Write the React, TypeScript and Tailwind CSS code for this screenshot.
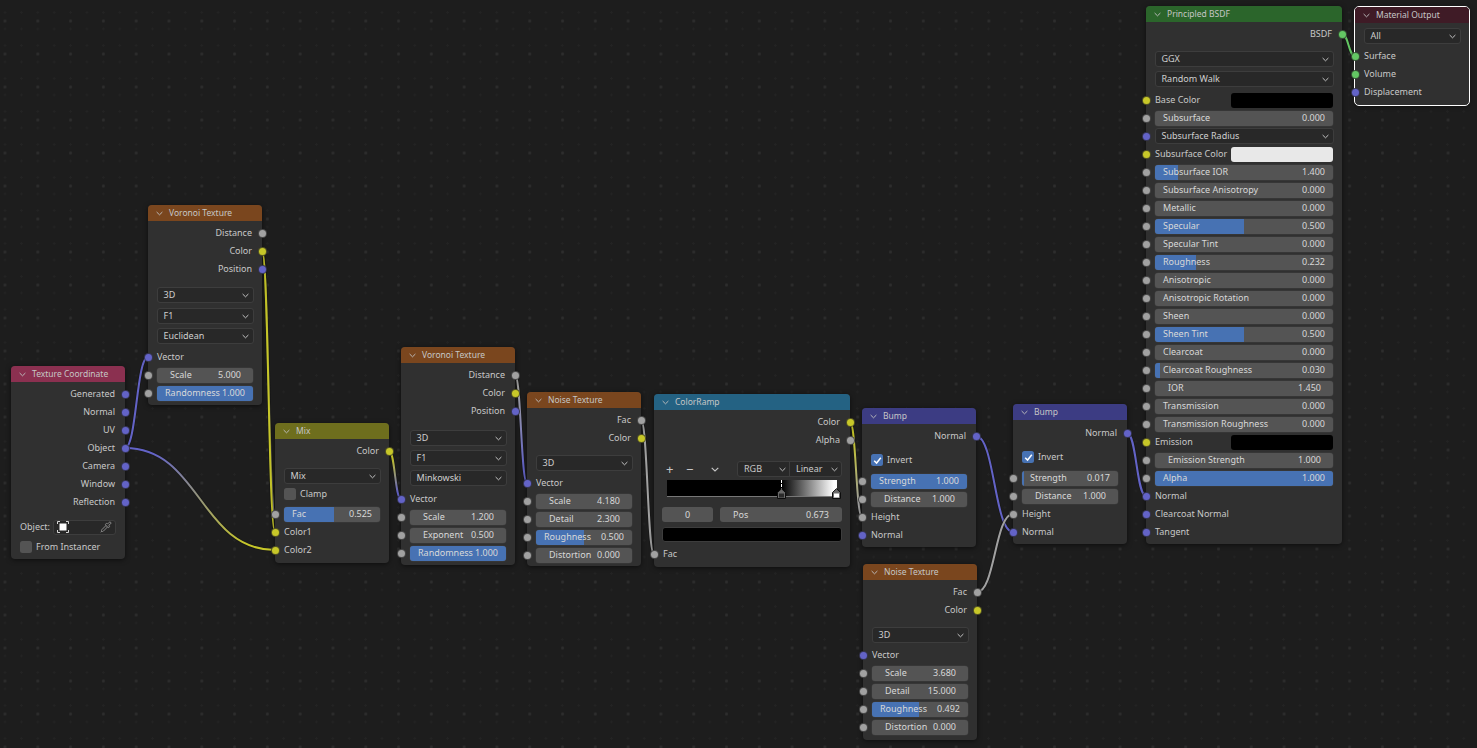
import React from "react";
import { Pipette } from "lucide-react";

const grey = "bg-[#a1a1a1]";
const yellow = "bg-[#c7c729]";
const blue = "bg-[#6363c7]";
const green = "bg-[#63c763]";

const wireColors = { g: "#a1a1a1", y: "#c7c729", b: "#6363c7", n: "#63c763" };

type WireColor = keyof typeof wireColors;

const wires: [number, number, WireColor, number, number, WireColor][] = [
  [125, 448, "b", 148, 357, "b"],
  [125, 448, "b", 275, 550, "y"],
  [262, 251, "y", 275, 514, "g"],
  [262, 251, "y", 275, 532, "y"],
  [389, 451, "y", 401, 499, "b"],
  [515, 375, "g", 527, 483, "b"],
  [641, 420, "g", 654, 554, "g"],
  [850, 422, "y", 862, 517, "g"],
  [976, 436, "b", 1013, 532, "b"],
  [977, 592, "g", 1013, 514, "g"],
  [1127, 433, "b", 1146, 496, "b"],
  [1342, 34, "n", 1355, 56, "n"],
];

function Wires() {
  return (
    <svg className="absolute inset-0" width={1477} height={748}>
      <defs>
        {wires.map(([x1, y1, c1, x2, y2, c2], i) => (
          <linearGradient key={i} id={`w${i}`} gradientUnits="userSpaceOnUse" x1={x1} y1={y1} x2={x2} y2={y2 + 0.01}>
            <stop offset="0.15" stopColor={wireColors[c1]} />
            <stop offset="0.85" stopColor={wireColors[c2]} />
          </linearGradient>
        ))}
      </defs>
      {wires.map(([x1, y1, , x2, y2], i) => {
        const h = (x2 - x1) / 2;
        const d = `M${x1} ${y1}C${x1 + h} ${y1} ${x2 - h} ${y2} ${x2} ${y2}`;
        return (
          <g key={i} fill="none">
            <path d={d} stroke="#151515" strokeOpacity="0.6" strokeWidth="3.6" />
            <path d={d} stroke={`url(#w${i})`} strokeWidth="2" />
          </g>
        );
      })}
    </svg>
  );
}

function Chevron({ className = "" }: { className?: string }) {
  return (
    <svg viewBox="0 0 8 5" className={`w-[7px] h-[5px] shrink-0 ${className}`} fill="none" stroke="currentColor" strokeWidth="1.1">
      <path d="M0.7 0.8 4 4 7.3 0.8" />
    </svg>
  );
}

function Socket({ color, side }: { color: string; side: "in" | "out" }) {
  return (
    <span
      className={`absolute top-[4.5px] w-[9px] h-[9px] rounded-full border border-[#222222]/70 ${color} ${
        side === "in" ? "left-[-4.5px]" : "right-[-4.5px]"
      }`}
    />
  );
}

function Node({
  pos,
  head,
  title,
  selected,
  children,
}: {
  pos: string;
  head: string;
  title: string;
  selected?: boolean;
  children: React.ReactNode;
}) {
  return (
    <div
      className={`absolute ${pos} rounded-[4px] bg-[#303030] shadow-[0_1px_5px_rgba(0,0,0,0.55)] ${
        selected ? "outline outline-[1.5px] outline-white" : ""
      }`}
    >
      <div className={`relative h-4 rounded-t-[4px] ${head} pl-[21px] text-[#c6c6c6] text-[8.5px] leading-4`}>
        <Chevron className="absolute left-[8px] top-[6px] text-[#bdbdbd]" />
        {title}
      </div>
      {children}
    </div>
  );
}

function Out({ label, color, cls = "" }: { label: string; color: string; cls?: string }) {
  return (
    <div className={`relative h-[18px] leading-[18px] text-right pr-[10px] ${cls}`}>
      {label}
      <Socket color={color} side="out" />
    </div>
  );
}

function In({ label, color, cls = "" }: { label: string; color: string; cls?: string }) {
  return (
    <div className={`relative h-[18px] leading-[18px] pl-[9px] ${cls}`}>
      {label}
      <Socket color={color} side="in" />
    </div>
  );
}

function Field({
  label,
  value,
  fill,
  cls = "",
  socket = grey,
}: {
  label: string;
  value: string;
  fill?: number;
  cls?: string;
  socket?: string | null;
}) {
  const slider = fill !== undefined;
  return (
    <div className={`relative h-[18px] px-[9px] pt-[1.5px] ${cls}`}>
      {socket && <Socket color={socket} side="in" />}
      <div
        className={`relative h-[15px] rounded-[3px] bg-[#545454] overflow-hidden shadow-[0_0_0_0.5px_#3d3d3d] flex justify-between items-center text-[#d8d8d8] ${
          slider ? "px-2" : "pl-[13px] pr-3"
        }`}
      >
        {slider && <div className="absolute left-0 top-0 bottom-0 bg-[#4772b3]" style={{ width: `${fill}%` }} />}
        <span className="relative">{label}</span>
        <span className="relative">{value}</span>
      </div>
    </div>
  );
}

function Select({ label, cls = "", rowH = "h-5", socket }: { label: string; cls?: string; rowH?: string; socket?: string }) {
  return (
    <div className={`relative ${rowH} px-[8.5px] flex items-center ${cls}`}>
      {socket && <Socket color={socket} side="in" />}
      <div className="flex-1 h-4 rounded-[3px] bg-[#282828] border border-[#3d3d3d] flex items-center justify-between pl-[6px] pr-[4px] text-[#cfcfcf]">
        <span>{label}</span>
        <Chevron className="text-[#cccccc]" />
      </div>
    </div>
  );
}

function Check({ label, checked, cls = "" }: { label: string; checked?: boolean; cls?: string }) {
  return (
    <div className={`h-[18px] px-[9px] flex items-center gap-[4px] ${cls}`}>
      <span className={`w-[12px] h-[12px] rounded-[2.5px] flex items-center justify-center ${checked ? "bg-[#4772b3]" : "bg-[#545454]"}`}>
        {checked && (
          <svg viewBox="0 0 12 12" className="w-[11px] h-[11px]" fill="none" stroke="#ffffff" strokeWidth="1.6">
            <path d="M2.4 6.2 5 8.8 9.6 3" />
          </svg>
        )}
      </span>
      <span>{label}</span>
    </div>
  );
}

function Swatch({ label, color, socket, cls = "" }: { label: string; color: string; socket: string; cls?: string }) {
  return (
    <div className={`relative h-[18px] pl-[9px] pr-[9px] flex items-center justify-between ${cls}`}>
      <Socket color={socket} side="in" />
      <span>{label}</span>
      <div className={`w-[102px] h-[15px] rounded-[3px] ${color}`} />
    </div>
  );
}

function Stop({ active, cls }: { active?: boolean; cls: string }) {
  return (
    <svg viewBox="0 0 9 11" className={`absolute w-[9px] h-[11px] ${cls}`}>
      <path d="M0.5 10.5V4.5L4.5 0.7 8.5 4.5V10.5Z" fill="#6a6a6a" stroke="#0c0c0c" />
      <rect x="2" y="5.5" width="5" height="4" fill={active ? "#ffffff" : "#2a2a2a"} />
    </svg>
  );
}

function ObjectIcon() {
  return (
    <svg viewBox="0 0 12 12" className="w-3 h-3" fill="none" stroke="#d8d8d8" strokeWidth="1">
      <path d="M0.5 3V0.5H3M9 0.5H11.5V3M11.5 9V11.5H9M3 11.5H0.5V9" />
      <rect x="2.5" y="2.5" width="7" height="7" fill="#ffffff" stroke="none" />
    </svg>
  );
}

export default function App() {
  return (
    <div
      className="relative w-[1477px] h-[748px] overflow-hidden bg-[#1d1d1d] text-[#c8c8c8] text-[9px] bg-[radial-gradient(circle,#2d2d2d_1.3px,transparent_1.6px),radial-gradient(circle,#232323_1px,transparent_1.3px)] bg-[size:32.8px_33px,16.4px_16.5px] bg-[position:-11.4px_4.5px,-3.2px_4.2px]"
      style={{ fontFamily: '"Noto Sans", sans-serif' }}
    >
      <Wires />

      <Node pos="left-[11px] top-[366px] w-[114px]" head="bg-[#8b3050]" title="Texture Coordinate">
        <div className="pt-[3px] pb-[3px]">
          <Out label="Generated" color={blue} />
          <Out label="Normal" color={blue} />
          <Out label="UV" color={blue} />
          <Out label="Object" color={blue} />
          <Out label="Camera" color={blue} />
          <Out label="Window" color={blue} />
          <Out label="Reflection" color={blue} />
          <div className="mt-[7px] h-[18px] pl-[9px] pr-[9px] flex items-center gap-[3px]">
            <span>Object:</span>
            <div className="flex-1 h-[15px] rounded-[3px] bg-[#282828] border border-[#3d3d3d] flex items-center justify-between px-[3px]">
              <ObjectIcon />
              <Pipette size={12} className="text-[#8a8a8a]" />
            </div>
          </div>
          <Check label="From Instancer" cls="mt-[2px]" />
        </div>
      </Node>

      <Node pos="left-[148px] top-[205px] w-[114px]" head="bg-[#7a461e]" title="Voronoi Texture">
        <div className="pt-[3px] pb-[3px]">
          <Out label="Distance" color={grey} />
          <Out label="Color" color={yellow} />
          <Out label="Position" color={blue} />
          <Select label="3D" cls="mt-[7px]" />
          <Select label="F1" cls="mt-[1px]" />
          <Select label="Euclidean" />
          <In label="Vector" color={blue} cls="mt-[2px]" />
          <Field label="Scale" value="5.000" />
          <Field label="Randomness" value="1.000" fill={100} />
        </div>
      </Node>

      <Node pos="left-[275px] top-[423px] w-[114px]" head="bg-[#6e6e1d]" title="Mix">
        <div className="pt-[3px] pb-[4px]">
          <Out label="Color" color={yellow} />
          <Select label="Mix" rowH="h-[18px]" cls="mt-[7px]" />
          <Check label="Clamp" />
          <Field label="Fac" value="0.525" fill={52.5} cls="mt-[2px]" />
          <In label="Color1" color={yellow} />
          <In label="Color2" color={yellow} />
        </div>
      </Node>

      <Node pos="left-[401px] top-[347px] w-[114px]" head="bg-[#7a461e]" title="Voronoi Texture">
        <div className="pt-[3px] pb-[3px]">
          <Out label="Distance" color={grey} />
          <Out label="Color" color={yellow} />
          <Out label="Position" color={blue} />
          <Select label="3D" cls="mt-[8px]" />
          <Select label="F1" />
          <Select label="Minkowski" />
          <In label="Vector" color={blue} cls="mt-[2px]" />
          <Field label="Scale" value="1.200" />
          <Field label="Exponent" value="0.500" />
          <Field label="Randomness" value="1.000" fill={100} />
        </div>
      </Node>

      <Node pos="left-[527px] top-[392px] w-[114px]" head="bg-[#7a461e]" title="Noise Texture">
        <div className="pt-[3px] pb-[2px]">
          <Out label="Fac" color={grey} />
          <Out label="Color" color={yellow} />
          <Select label="3D" cls="mt-[6px]" />
          <In label="Vector" color={blue} cls="mt-[1px]" />
          <Field label="Scale" value="4.180" />
          <Field label="Detail" value="2.300" />
          <Field label="Roughness" value="0.500" fill={50} />
          <Field label="Distortion" value="0.000" />
        </div>
      </Node>

      <Node pos="left-[654px] top-[394px] w-[196px]" head="bg-[#246283]" title="ColorRamp">
        <div className="pt-[3px] pb-[4px]">
          <Out label="Color" color={yellow} />
          <Out label="Alpha" color={grey} />
          <div className="mt-[12px] h-4 flex items-center pl-[12px] pr-[8px]">
            <span className="text-[13px] leading-none w-[20px]">+</span>
            <span className="text-[13px] leading-none w-[25px]">−</span>
            <Chevron className="w-[8px]" />
            <div className="ml-[18px] flex-1 h-4 rounded-[3px] bg-[#282828] border border-[#3d3d3d] flex">
              <div className="w-[52px] border-r border-[#3d3d3d] flex items-center justify-between pl-[6px] pr-[3px]">
                RGB
                <Chevron />
              </div>
              <div className="flex-1 flex items-center justify-between pl-[6px] pr-[3px]">
                Linear
                <Chevron />
              </div>
            </div>
          </div>
          <div className="relative mt-[3px] ml-[13px] w-[170px] h-[17px] border-b border-[#777777] bg-[linear-gradient(to_right,#000000_67.3%,#ffffff_98%)]">
            <div className="absolute left-[114px] top-0 h-[11px] border-l border-dashed border-white" />
            <Stop cls="left-[110px] top-[8px]" />
            <Stop active cls="left-[165px] top-[8px]" />
          </div>
          <div className="mt-[10px] px-2 flex gap-[7px] text-[#d8d8d8]">
            <div className="w-[51px] h-[15px] rounded-[3px] bg-[#545454] flex items-center justify-center">0</div>
            <div className="flex-1 h-[15px] rounded-[3px] bg-[#545454] flex items-center justify-between px-[13px]">
              <span>Pos</span>
              <span>0.673</span>
            </div>
          </div>
          <div className="mt-[5px] mx-2 h-[15px] rounded-[3px] bg-black border border-[#3d3d3d]" />
          <In label="Fac" color={grey} cls="mt-[3px]" />
        </div>
      </Node>

      <Node pos="left-[862px] top-[408px] w-[114px]" head="bg-[#3c3c83]" title="Bump">
        <div className="pt-[3px] pb-[3px]">
          <Out label="Normal" color={blue} />
          <Check label="Invert" checked cls="mt-[6px]" />
          <Field label="Strength" value="1.000" fill={100} cls="mt-[3px]" />
          <Field label="Distance" value="1.000" />
          <In label="Height" color={grey} />
          <In label="Normal" color={blue} />
        </div>
      </Node>

      <Node pos="left-[1013px] top-[404px] w-[114px]" head="bg-[#3c3c83]" title="Bump">
        <div className="pt-[4px] pb-[3px]">
          <Out label="Normal" color={blue} />
          <Check label="Invert" checked cls="mt-[6px]" />
          <Field label="Strength" value="0.017" fill={1.7} cls="mt-[3px]" />
          <Field label="Distance" value="1.000" />
          <In label="Height" color={grey} />
          <In label="Normal" color={blue} />
        </div>
      </Node>

      <Node pos="left-[863px] top-[564px] w-[114px]" head="bg-[#7a461e]" title="Noise Texture">
        <div className="pt-[3px] pb-[4px]">
          <Out label="Fac" color={grey} />
          <Out label="Color" color={yellow} />
          <Select label="3D" cls="mt-[6px]" />
          <In label="Vector" color={blue} cls="mt-[1px]" />
          <Field label="Scale" value="3.680" />
          <Field label="Detail" value="15.000" />
          <Field label="Roughness" value="0.492" fill={49.2} />
          <Field label="Distortion" value="0.000" />
        </div>
      </Node>

      <Node pos="left-[1146px] top-[6px] w-[196px]" head="bg-[#2b652b]" title="Principled BSDF">
        <div className="pt-[3px] pb-[3px]">
          <Out label="BSDF" color={green} />
          <Select label="GGX" cls="mt-[6px]" />
          <Select label="Random Walk" />
          <Swatch label="Base Color" color="bg-black" socket={yellow} cls="mt-[2px]" />
          <Field label="Subsurface" value="0.000" fill={0} />
          <Select label="Subsurface Radius" rowH="h-[18px]" socket={blue} />
          <Swatch label="Subsurface Color" color="bg-[#e8e8e8]" socket={yellow} />
          <Field label="Subsurface IOR" value="1.400" fill={13} />
          <Field label="Subsurface Anisotropy" value="0.000" fill={0} />
          <Field label="Metallic" value="0.000" fill={0} />
          <Field label="Specular" value="0.500" fill={50} />
          <Field label="Specular Tint" value="0.000" fill={0} />
          <Field label="Roughness" value="0.232" fill={23.2} />
          <Field label="Anisotropic" value="0.000" fill={0} />
          <Field label="Anisotropic Rotation" value="0.000" fill={0} />
          <Field label="Sheen" value="0.000" fill={0} />
          <Field label="Sheen Tint" value="0.500" fill={50} />
          <Field label="Clearcoat" value="0.000" fill={0} />
          <Field label="Clearcoat Roughness" value="0.030" fill={3} />
          <Field label="IOR" value="1.450" />
          <Field label="Transmission" value="0.000" fill={0} />
          <Field label="Transmission Roughness" value="0.000" fill={0} />
          <Swatch label="Emission" color="bg-black" socket={yellow} />
          <Field label="Emission Strength" value="1.000" />
          <Field label="Alpha" value="1.000" fill={100} />
          <In label="Normal" color={blue} />
          <In label="Clearcoat Normal" color={blue} />
          <In label="Tangent" color={blue} />
        </div>
      </Node>

      <Node pos="left-[1355px] top-[7px] w-[114px]" head="bg-[#3f1b26]" title="Material Output" selected>
        <div className="pt-[4px] pb-[4px]">
          <Select label="All" rowH="h-[18px]" />
          <In label="Surface" color={green} cls="mt-[2px]" />
          <In label="Volume" color={green} />
          <In label="Displacement" color={blue} />
        </div>
      </Node>
    </div>
  );
}
